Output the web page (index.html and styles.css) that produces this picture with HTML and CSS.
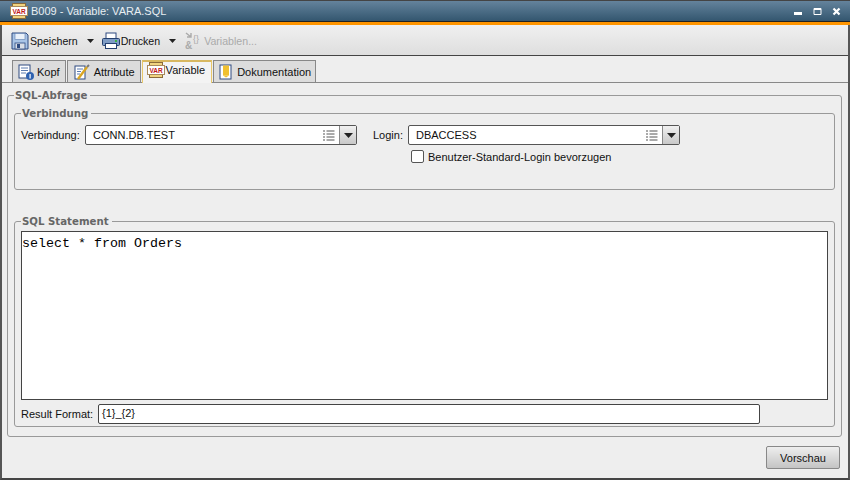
FILE: index.html
```html
<!DOCTYPE html>
<html lang="de">
<head>
<meta charset="utf-8">
<title>B009 - Variable: VARA.SQL</title>
<link rel="stylesheet" href="styles.css">
</head>
<body>
<svg class="defs" width="0" height="0" aria-hidden="true">
  <defs>
    <symbol id="var" viewBox="0 0 18 16">
      <rect x="2.500" y="0.500" width="13" height="15" fill="#f0d380" stroke="#8a6a3a"/>
      <rect x="0.500" y="3.500" width="17" height="9" fill="#fff" stroke="#a98a5c"/>
      <text x="9" y="10.800" text-anchor="middle" class="vartext">VAR</text>
    </symbol>
    <symbol id="list" viewBox="0 0 12 11">
      <path d="M0 1h2M0 4h2M0 7h2M0 10h2M3.500 1h8M3.500 4h8M3.500 7h8M3.500 10h8" stroke="#555" fill="none"/>
    </symbol>
    <symbol id="arrow" viewBox="0 0 9 5">
      <path d="M0 0h9L4.500 5z" fill="#222"/>
    </symbol>
  </defs>
</svg>
<div class="window">
  <header class="titlebar">
    <svg class="title-icon"><use href="#var"/></svg>
    <span class="title-text">B009 - Variable: VARA.SQL</span>
    <div class="win-controls">
      <svg class="ctl" viewBox="0 0 9 9"><rect x="0" y="5" width="8" height="3" fill="#fff"/></svg>
      <svg class="ctl" viewBox="0 0 9 9"><path d="M1 1.500h7v6H1z" fill="none" stroke="#fff"/><path d="M1 1h7v2H1z" fill="#fff"/></svg>
      <svg class="ctl" viewBox="0 0 9 9"><path d="M1.500 1.500l6 6M7.500 1.500l-6 6" stroke="#fff" stroke-width="2.200"/></svg>
    </div>
  </header>
  <div class="accent"></div>
  <div class="toolbar">
    <div class="tool">
      <svg class="tool-icon" viewBox="0 0 18 18">
        <path d="M1 1h14l2 2v14H1z" fill="#a9c4e6" stroke="#2e4a80"/>
        <rect x="4" y="1.500" width="10" height="6" fill="#eaf1fa" stroke="#5b7bae" stroke-width=".6"/>
        <rect x="4" y="11" width="10" height="6" fill="#d9dee6" stroke="#2e4a80" stroke-width=".8"/>
        <rect x="6" y="12" width="3" height="4" fill="#2e4a80"/>
      </svg>
      <span>Speichern</span>
    </div>
    <svg class="drop"><use href="#arrow"/></svg>
    <div class="tool">
      <svg class="tool-icon" viewBox="0 0 18 18">
        <rect x="4" y="1" width="10" height="6" fill="#fff" stroke="#2e4a80"/>
        <rect x="0.500" y="6.500" width="17" height="7" rx="1" fill="#7f9cc4" stroke="#24406f"/>
        <rect x="3.500" y="11.500" width="11" height="5" fill="#fff" stroke="#24406f"/>
        <rect x="13" y="8" width="2" height="2" fill="#3cb043"/>
      </svg>
      <span>Drucken</span>
    </div>
    <svg class="drop"><use href="#arrow"/></svg>
    <div class="tool disabled">
      <svg class="tool-icon" viewBox="0 0 18 18">
        <path d="M1 1l5 4M6 1v4H2" stroke="#aaa" fill="none" stroke-width="1.400"/>
        <text x="0" y="17" class="amp">&amp;</text>
        <text x="8" y="10" class="brace">{}</text>
      </svg>
      <span>Variablen...</span>
    </div>
  </div>
  <div class="tabs">
    <div class="tab tab-kopf">
      <svg class="tab-icon" viewBox="0 0 16 16">
        <rect x="1" y="1" width="11" height="13" fill="#fff" stroke="#2e4a80"/>
        <path d="M3 4h7M3 6.500h7M3 9h5" stroke="#5b7bae"/>
        <circle cx="12" cy="12" r="4" fill="#2f62b0"/>
        <rect x="11.500" y="10" width="1.200" height="4.500" fill="#fff"/>
      </svg>
      <span>Kopf</span>
    </div>
    <div class="tab tab-attr">
      <svg class="tab-icon" viewBox="0 0 16 16">
        <rect x="1" y="2" width="10" height="13" fill="#fff" stroke="#2e4a80"/>
        <path d="M3 5h6M3 7.500h4M3 10h3" stroke="#5b7bae"/>
        <path d="M4 15l9-12" stroke="#d9a520" stroke-width="2.400"/>
        <path d="M13 3l2-2" stroke="#777" stroke-width="2"/>
      </svg>
      <span>Attribute</span>
    </div>
    <div class="tab active">
      <svg class="tab-icon var-icon"><use href="#var"/></svg>
      <span>Variable</span>
    </div>
    <div class="tab tab-doc">
      <svg class="tab-icon" viewBox="0 0 16 16">
        <rect x="2" y="1" width="11" height="14" fill="#fff" stroke="#2e4a80"/>
        <rect x="5" y="1.500" width="6" height="10" fill="#f0c030"/>
        <path d="M5 11.500l3 2 3-2" fill="#f0c030"/>
      </svg>
      <span>Dokumentation</span>
    </div>
  </div>
  <main class="content">
    <fieldset class="group outer">
      <legend>SQL-Abfrage</legend>
      <fieldset class="group conn">
        <legend>Verbindung</legend>
        <div class="conn-row">
          <div class="field">
            <label class="label-conn">Verbindung:</label>
            <div class="combo">
              <span class="combo-value">CONN.DB.TEST</span>
              <svg class="combo-list"><use href="#list"/></svg>
              <span class="combo-btn"><svg class="combo-arrow"><use href="#arrow"/></svg></span>
            </div>
          </div>
          <div class="login-col">
            <div class="field">
              <label class="label-login">Login:</label>
              <div class="combo">
                <span class="combo-value">DBACCESS</span>
                <svg class="combo-list"><use href="#list"/></svg>
                <span class="combo-btn"><svg class="combo-arrow"><use href="#arrow"/></svg></span>
              </div>
            </div>
            <div class="check">
              <span class="box"></span>
              <span>Benutzer-Standard-Login bevorzugen</span>
            </div>
          </div>
        </div>
      </fieldset>
      <fieldset class="group sql">
        <legend>SQL Statement</legend>
        <div class="editor">select * from Orders</div>
        <div class="result-row">
          <label class="label-result">Result Format:</label>
          <div class="result-input">{1}_{2}</div>
        </div>
      </fieldset>
    </fieldset>
    <div class="actions">
      <button class="btn">Vorschau</button>
    </div>
  </main>
</div>
</body>
</html>
```
FILE: styles.css
```css
* { box-sizing: border-box; }
html, body { margin: 0; padding: 0; }
body {
  width: 850px;
  height: 480px;
  overflow: hidden;
  font-family: "Liberation Sans", sans-serif;
  font-size: 11px;
  color: #111;
  background: #eee;
}
.defs { position: absolute; }
.vartext { font: bold 6.5px "Liberation Sans", sans-serif; fill: #c01818; }
.amp { font: bold 10px "Liberation Sans", sans-serif; fill: #aaa; }
.brace { font: 9px "Liberation Sans", sans-serif; fill: #aaa; }

.window {
  width: 850px;
  height: 480px;
  display: flex;
  flex-direction: column;
  border-style: solid;
  border-width: 0 2px 2px 2px;
  border-color: #555 #555 #444 #555;
}
.titlebar {
  height: 22px;
  margin: 0 -2px;
  padding: 0 8px 0 10px;
  display: flex;
  align-items: center;
  flex: none;
  background: linear-gradient(#64839c, #33566f);
  border-top: 1px solid #444;
  border-bottom: 1px solid #222;
  color: #e8eef2;
}
.title-icon { width: 18px; height: 16px; }
.title-text { margin-left: 3px; }
.win-controls { margin-left: auto; display: flex; gap: 10px; padding-right: 1px; }
.ctl { width: 9px; height: 9px; }
.accent { height: 3px; flex: none; background: #ff9500; margin: 0 -2px; }
.toolbar {
  height: 31px;
  flex: none;
  display: flex;
  align-items: center;
  padding: 1px 0 0 9px;
  font-size: 10.6px;
  background: linear-gradient(#f0f0f0, #dedede);
  border-bottom: 1px solid #444;
}
.tool { display: flex; align-items: center; gap: 1px; }
.tool-icon { width: 18px; height: 18px; flex: none; }
.tool.disabled { color: #aaa; margin-left: 1px; }
.drop { width: 7px; height: 4px; margin: 1px 8px 0 9px; }
.tabs {
  height: 27px;
  flex: none;
  display: flex;
  align-items: flex-end;
  padding-left: 10px;
  background: #eee;
  border-bottom: 1px solid #888;
}
.tab {
  height: 22px;
  display: flex;
  align-items: center;
  gap: 3px;
  padding: 0 5px;
  background: #dcdcdc;
  border: 1px solid #888;
  border-bottom: 0;
  margin-right: 1px;
}
.tab-attr { padding: 0 5px 0 6px; gap: 4px; }
.tab-doc { padding: 0 4px; }
.tab-icon { width: 16px; height: 16px; flex: none; }
.tab-icon.var-icon { width: 18px; }
.tab.active {
  height: 23px;
  margin-bottom: -1px;
  padding: 0 6px 5px 4px;
  gap: 1px;
  background: #f3f3f3;
  border: 1px solid #e9c86a;
  border-top: 2px solid #d8b860;
  border-bottom: 0;
}
.content {
  flex: 1;
  min-height: 0;
  display: flex;
  flex-direction: column;
  padding: 7px 6px 0 5px;
  background: #eee;
}
.group {
  margin: 0;
  min-width: 0;
  border: 1px solid #999;
  border-radius: 3px;
}
.group legend {
  padding: 0 3px 0 1px;
  font: bold 10.2px "DejaVu Sans", sans-serif;
  color: #666;
}
.outer { height: 347px; padding: 0 6px 5px; flex: none; }
.conn { height: 82px; padding: 6px 0 0 6px; flex: none; margin-top: 7px; }
.conn-row { display: flex; align-items: flex-start; gap: 16px; }
.field { display: flex; align-items: center; gap: 6px; }
.label-conn { width: 58px; }
.label-login { width: 29px; white-space: nowrap; }
.label-result { width: 71px; white-space: nowrap; }
.combo {
  width: 272px;
  height: 20px;
  display: flex;
  align-items: center;
  padding-left: 7px;
  background: #fff;
  border: 1px solid #555;
  border-radius: 2px;
}
.combo-value { flex: 1; }
.combo-list { width: 12px; height: 11px; margin-right: 4px; }
.combo-btn {
  width: 17px;
  height: 18px;
  display: flex;
  align-items: center;
  justify-content: center;
  background: linear-gradient(#f0f0f0, #c8c8c8);
  border-left: 1px solid #888;
}
.combo-arrow { width: 9px; height: 5px; }
.check { display: flex; align-items: center; gap: 4px; margin: 5px 0 0 38px; }
.box {
  width: 13px;
  height: 13px;
  background: #fff;
  border: 1px solid #555;
  border-radius: 2px;
}
.login-col { display: flex; flex-direction: column; }
.sql { height: 211px; padding: 4px 6px 0; flex: none; margin-top: 26px; }
.editor {
  height: 169px;
  padding: 4px 0 0;
  background: #fff;
  border: 1px solid #444;
  font: 13.33px/16px "Liberation Mono", monospace;
  color: #000;
}
.result-row { display: flex; align-items: center; gap: 6px; margin-top: 4px; }
.result-input {
  width: 662px;
  height: 20px;
  padding: 2px 0 0 3px;
  background: #fff;
  border: 1px solid #444;
  border-radius: 2px;
}
.actions { display: flex; justify-content: flex-end; padding: 9px 2px 0 0; }
.btn {
  width: 74px;
  height: 23px;
  padding: 0;
  font: inherit;
  color: #111;
  background: linear-gradient(#eee, #c4c4c4);
  border: 1px solid #888;
  border-radius: 2px;
}
```
